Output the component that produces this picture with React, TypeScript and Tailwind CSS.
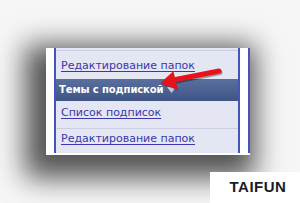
import React from 'react'

const rowLink = 'text-[11px] leading-none text-[#3a38aa] underline underline-offset-2 decoration-1'

export default function App() {
  return (
    <div className="relative w-[300px] h-[203px] overflow-hidden bg-[#f6f6f6] font-['DejaVu_Sans',sans-serif]">
      <div className="pt-[48px] pl-[46px]">
        <div className="flex w-[204px] h-[107px] bg-white pb-[2px] shadow-[-8px_10px_26px_13px_rgba(0,0,0,0.66)]">
          <div className="w-[8px]" />
          <div className="flex w-[186px] flex-col border-x-2 border-[#4454b8] bg-[#e4e6f3]">
            <div className="h-[3px] border-b border-[#cbcee2]" />
            <div className="flex h-[28px] items-end pb-[8px] pl-[5px]">
              <span className={rowLink}>Редактирование папок</span>
            </div>
            <div className="flex h-[22px] items-center gap-[4px] bg-gradient-to-b from-[#5a6f9c] to-[#3e5587] pl-[3px]">
              <span className="text-[10px] font-bold leading-none tracking-[-0.1px] text-white">Темы с подпиской</span>
              <svg width="9" height="6" viewBox="0 0 9 6">
                <path d="M0 0h9L4.5 6z" fill="#c3c9da" />
              </svg>
            </div>
            <div className="flex h-[28px] items-end border-b border-[#cbcee2] pb-[10px] pl-[5px]">
              <span className={rowLink}>Список подписок</span>
            </div>
            <div className="flex h-[24px] items-end pb-[9px] pl-[5px]">
              <span className={rowLink}>Редактирование папок</span>
            </div>
          </div>
          <div className="w-[8px] border-r-2 border-[#4454b8] box-content" />
        </div>
      </div>

      <svg className="absolute left-[156px] top-[64px]" width="70" height="30" viewBox="0 0 70 30">
        <g transform="translate(1 1.5)" opacity="0.35">
          <path d="M63 7 L12 17" stroke="#000" strokeWidth="5" strokeLinecap="round" />
          <path d="M5 19 L17 8 L21 25 Z" fill="#000" />
        </g>
        <path d="M63 7 L12 17" stroke="#e8121a" strokeWidth="5" strokeLinecap="round" />
        <path d="M5 19 L17 8 L21 25 Z" fill="#e8121a" strokeLinejoin="round" stroke="#e8121a" strokeWidth="1" />
      </svg>

      <div className="absolute right-0 bottom-0 flex h-[31px] w-[90px] items-center justify-center bg-white pl-[6px]">
        <span className="font-['Liberation_Sans',sans-serif] text-[15px] font-bold tracking-[0.5px] text-[#1c1c1c]">TAIFUN</span>
      </div>
    </div>
  )
}
